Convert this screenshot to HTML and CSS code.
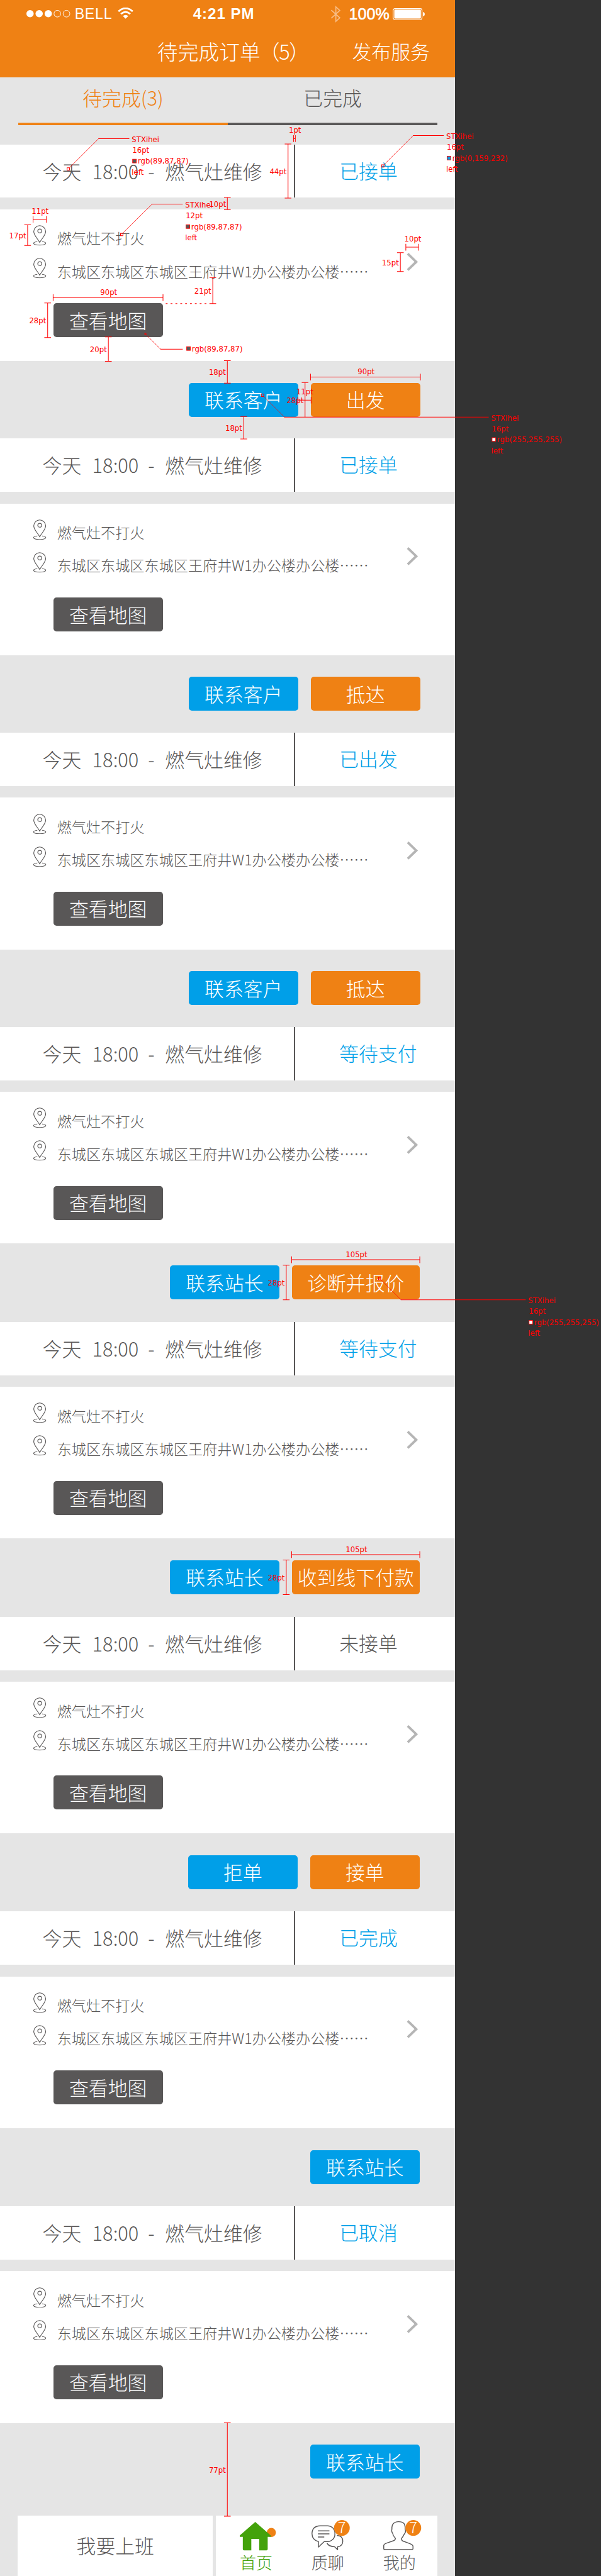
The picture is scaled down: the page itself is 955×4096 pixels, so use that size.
FILE: index.html
```html
<!DOCTYPE html>
<html lang="zh-CN">
<head>
<meta charset="utf-8">
<title>待完成订单</title>
<link rel="stylesheet" href="styles.css">
</head>
<body>
<svg class="defs" width="0" height="0" aria-hidden="true">
  <symbol id="pin" viewBox="0 0 22 34">
    <path d="M11 28.5C7.500 22 1.200 16.500 1.200 10.600a9.800 9.800 0 0 1 19.600 0C20.800 16.500 14.500 22 11 28.500z"/>
    <circle cx="11" cy="9.500" r="3.200"/>
    <path d="M7 27.200c-3.500.4-6 1.400-6 2.700 0 1.800 4.500 3 10 3s10-1.200 10-3c0-1.300-2.500-2.300-6-2.700"/>
  </symbol>
  <symbol id="arrow" viewBox="0 0 20 32">
    <path d="M2.500 2.500L16.500 16L2.500 29.500"/>
  </symbol>
</svg>
<div class="board">
  <main class="phone">
    <header class="top">
      <div class="status-bar">
        <svg class="signal" width="74" height="14" viewBox="0 0 74 14">
          <g fill="#fff"><circle cx="7" cy="7" r="6"/><circle cx="22" cy="7" r="6"/><circle cx="37" cy="7" r="6"/></g>
          <g fill="none" stroke="#fff"><circle cx="52" cy="7" r="5.500"/><circle cx="67" cy="7" r="5.500"/></g>
        </svg>
        <span class="carrier">BELL</span>
        <svg class="wifi" width="26" height="19" viewBox="0 0 26 19">
          <path d="M1.300 6.300Q13-4 24.700 6.300M5.300 10.600Q13 4 20.700 10.600" fill="none" stroke="#fff" stroke-width="2.900"/>
          <path d="M8.500 14Q13 10.200 17.500 14L13 18.500z" fill="#fff"/>
        </svg>
        <span class="clock">4:21 PM</span>
        <svg class="bluetooth" width="18" height="28" viewBox="0 0 18 28">
          <path d="M1.500 7.500L15.500 20L9 26V2L15.500 8L1.500 20.500" fill="none" stroke="#f8bd86" stroke-width="1.700"/>
        </svg>
        <span class="percent">100%</span>
        <svg class="battery" width="54" height="20" viewBox="0 0 54 20">
          <rect x=".7" y=".7" width="47.600" height="18.200" rx="3" fill="none" stroke="#fff" stroke-width="1.200"/>
          <rect x="2.600" y="2.400" width="43.800" height="14.800" rx="1.500" fill="#fff"/>
          <path d="M50 6.200q2.800.6 2.800 3.600t-2.800 3.600z" fill="#fff"/>
        </svg>
      </div>
      <div class="nav">
        <h1 class="nav-title">待完成订单<span class="count">（5）</span></h1>
        <span class="nav-link">发布服务</span>
      </div>
    </header>
    <nav class="tabs">
      <span class="tab tab-active">待完成(3)</span>
      <span class="tab">已完成</span>
    </nav>

    <section class="order">
      <div class="order-head"><div class="what"><span class="day">今天</span><span class="time">18:00</span><span class="dash">-</span><span>燃气灶维修</span></div><span class="state">已接单</span></div>
      <div class="order-body">
        <div class="lines">
          <div class="line"><svg class="pin"><use href="#pin"/></svg><span>燃气灶不打火</span></div>
          <div class="line"><svg class="pin"><use href="#pin"/></svg><span>东城区东城区东城区王府井<span class="num">W1</span>办公楼办公楼……</span></div>
          <span class="btn btn-map">查看地图</span>
        </div>
        <svg class="arrow"><use href="#arrow"/></svg>
      </div>
      <div class="actions"><span class="btn btn-blue">联系客户</span><span class="btn btn-orange">出发</span></div>
    </section>

    <section class="order">
      <div class="order-head"><div class="what"><span class="day">今天</span><span class="time">18:00</span><span class="dash">-</span><span>燃气灶维修</span></div><span class="state">已接单</span></div>
      <div class="order-body">
        <div class="lines">
          <div class="line"><svg class="pin"><use href="#pin"/></svg><span>燃气灶不打火</span></div>
          <div class="line"><svg class="pin"><use href="#pin"/></svg><span>东城区东城区东城区王府井<span class="num">W1</span>办公楼办公楼……</span></div>
          <span class="btn btn-map">查看地图</span>
        </div>
        <svg class="arrow"><use href="#arrow"/></svg>
      </div>
      <div class="actions"><span class="btn btn-blue">联系客户</span><span class="btn btn-orange">抵达</span></div>
    </section>

    <section class="order">
      <div class="order-head"><div class="what"><span class="day">今天</span><span class="time">18:00</span><span class="dash">-</span><span>燃气灶维修</span></div><span class="state">已出发</span></div>
      <div class="order-body">
        <div class="lines">
          <div class="line"><svg class="pin"><use href="#pin"/></svg><span>燃气灶不打火</span></div>
          <div class="line"><svg class="pin"><use href="#pin"/></svg><span>东城区东城区东城区王府井<span class="num">W1</span>办公楼办公楼……</span></div>
          <span class="btn btn-map">查看地图</span>
        </div>
        <svg class="arrow"><use href="#arrow"/></svg>
      </div>
      <div class="actions"><span class="btn btn-blue">联系客户</span><span class="btn btn-orange">抵达</span></div>
    </section>

    <section class="order tall">
      <div class="order-head"><div class="what"><span class="day">今天</span><span class="time">18:00</span><span class="dash">-</span><span>燃气灶维修</span></div><span class="state">等待支付</span></div>
      <div class="order-body">
        <div class="lines">
          <div class="line"><svg class="pin"><use href="#pin"/></svg><span>燃气灶不打火</span></div>
          <div class="line"><svg class="pin"><use href="#pin"/></svg><span>东城区东城区东城区王府井<span class="num">W1</span>办公楼办公楼……</span></div>
          <span class="btn btn-map">查看地图</span>
        </div>
        <svg class="arrow"><use href="#arrow"/></svg>
      </div>
      <div class="actions"><span class="btn btn-blue">联系站长</span><span class="btn btn-orange wide">诊断并报价</span></div>
    </section>

    <section class="order tall">
      <div class="order-head"><div class="what"><span class="day">今天</span><span class="time">18:00</span><span class="dash">-</span><span>燃气灶维修</span></div><span class="state">等待支付</span></div>
      <div class="order-body">
        <div class="lines">
          <div class="line"><svg class="pin"><use href="#pin"/></svg><span>燃气灶不打火</span></div>
          <div class="line"><svg class="pin"><use href="#pin"/></svg><span>东城区东城区东城区王府井<span class="num">W1</span>办公楼办公楼……</span></div>
          <span class="btn btn-map">查看地图</span>
        </div>
        <svg class="arrow"><use href="#arrow"/></svg>
      </div>
      <div class="actions"><span class="btn btn-blue">联系站长</span><span class="btn btn-orange wide">收到线下付款</span></div>
    </section>

    <section class="order tall">
      <div class="order-head"><div class="what"><span class="day">今天</span><span class="time">18:00</span><span class="dash">-</span><span>燃气灶维修</span></div><span class="state state-new">未接单</span></div>
      <div class="order-body">
        <div class="lines">
          <div class="line"><svg class="pin"><use href="#pin"/></svg><span>燃气灶不打火</span></div>
          <div class="line"><svg class="pin"><use href="#pin"/></svg><span>东城区东城区东城区王府井<span class="num">W1</span>办公楼办公楼……</span></div>
          <span class="btn btn-map">查看地图</span>
        </div>
        <svg class="arrow"><use href="#arrow"/></svg>
      </div>
      <div class="actions"><span class="btn btn-blue">拒单</span><span class="btn btn-orange">接单</span></div>
    </section>

    <section class="order tall">
      <div class="order-head"><div class="what"><span class="day">今天</span><span class="time">18:00</span><span class="dash">-</span><span>燃气灶维修</span></div><span class="state">已完成</span></div>
      <div class="order-body">
        <div class="lines">
          <div class="line"><svg class="pin"><use href="#pin"/></svg><span>燃气灶不打火</span></div>
          <div class="line"><svg class="pin"><use href="#pin"/></svg><span>东城区东城区东城区王府井<span class="num">W1</span>办公楼办公楼……</span></div>
          <span class="btn btn-map">查看地图</span>
        </div>
        <svg class="arrow"><use href="#arrow"/></svg>
      </div>
      <div class="actions"><span class="btn btn-blue">联系站长</span></div>
    </section>

    <section class="order last">
      <div class="order-head"><div class="what"><span class="day">今天</span><span class="time">18:00</span><span class="dash">-</span><span>燃气灶维修</span></div><span class="state">已取消</span></div>
      <div class="order-body">
        <div class="lines">
          <div class="line"><svg class="pin"><use href="#pin"/></svg><span>燃气灶不打火</span></div>
          <div class="line"><svg class="pin"><use href="#pin"/></svg><span>东城区东城区东城区王府井<span class="num">W1</span>办公楼办公楼……</span></div>
          <span class="btn btn-map">查看地图</span>
        </div>
        <svg class="arrow"><use href="#arrow"/></svg>
      </div>
      <div class="actions"><span class="btn btn-blue">联系站长</span></div>
    </section>

    <footer class="dock">
      <div class="shift">我要上班</div>
      <div class="menu">
        <div class="item item-active">
          <svg class="glyph" width="60" height="50" viewBox="0 0 60 50">
            <circle cx="52" cy="19.500" r="7.500" fill="#ef8114"/>
            <path d="M25.500 2.200L51 24.300v2.500H46V47a2 2 0 0 1-2 2H32V30H19v19H7a2 2 0 0 1-2-2V26.800H0v-2.500z" fill="#43a20b"/>
          </svg>
          <span>首页</span>
        </div>
        <div class="item">
          <svg class="glyph" width="66" height="52" viewBox="0 0 66 52">
            <g fill="none" stroke="#595757" stroke-width="1.500" stroke-linejoin="round">
              <path d="M14 9.500h12.500a12 12 0 0 1 12 12v2a12 12 0 0 1-12 12H21L11.500 44.500V35.500Q1 33 .8 22.500Q1 10 14 9.500z"/>
              <path d="M42 25.500q9.500.5 9.500 9.500 0 8-8.500 9v5l-5-5q-10-.5-12.500-6M10.500 17.800h19M10.500 22.900h19M10.500 28h10.500"/>
            </g>
            <circle cx="50" cy="13" r="13" fill="#ef8114"/>
            <text class="badge" x="50" y="22">7</text>
          </svg>
          <span>质聊</span>
        </div>
        <div class="item">
          <svg class="glyph" width="66" height="52" viewBox="0 0 66 52">
            <path d="M25 2.700C34 2.500 36.500 7 36 15q2 4-1.500 8.500-2.500 5-4.500 7 .3 3.500 2 4l12 4.500q5 2 5 4.500V47q0 1.800-2 1.800H2.500Q.8 48.800.8 47v-5q0-2.500 5-4l11.500-4q2.700-1 2.700-4-4-4-4.500-8-2.500-4-1.200-7Q13.500 3 25 2.700z" fill="#fff" stroke="#595757" stroke-width="1.500" stroke-linejoin="round"/>
            <circle cx="49.500" cy="13" r="13" fill="#ef8114"/>
            <text class="badge" x="49.500" y="22">7</text>
          </svg>
          <span>我的</span>
        </div>
      </div>
    </footer>
  </main>

  <svg class="notes" width="990" height="4245" viewBox="0 0 990 4245">
    <g class="rule">
      <!-- vertical measures -->
      <path d="M469 237.500h11M474.500 237.500V326.500M469 326.500h11"/>
      <path d="M369 325.500h11M374.500 325.500V345.500M369 345.500h11"/>
      <path d="M40 370.500h11M45.500 370.500V404.500M40 404.500h11"/>
      <path d="M345 457.500h11M350.500 457.500V500.500M345 500.500h11"/>
      <path d="M73 499.500h11M78.500 499.500V556.500M73 556.500h11"/>
      <path d="M173 555.500h11M178.500 555.500V595.500M173 595.500h11"/>
      <path d="M369 594.500h11M374.500 594.500V631.500M369 631.500h11"/>
      <path d="M396 686.500h11M401.500 686.500V723.500M396 723.500h11"/>
      <path d="M497 630.500h11M502.500 630.500V687.500"/>
      <path d="M654 416.500h11M659.500 416.500V447.500M654 447.500h11"/>
      <path d="M466 2085.500h11M471.500 2085.500V2142.500M466 2142.500h11"/>
      <path d="M466 2571.500h11M471.500 2571.500V2628.500M466 2628.500h11"/>
      <path d="M369 3993.500h11M374.500 3993.500V4147.500M369 4147.500h11"/>
      <!-- horizontal measures -->
      <path d="M483.500 223v11M483.500 228.500H486.500M486.500 223v11"/>
      <path d="M54.500 356v11M54.500 361.500H76.500M76.500 356v11"/>
      <path d="M87.500 485v11M87.500 490.500H268.500M268.500 485v11"/>
      <path d="M490.500 654v11M490.500 659.500H512.500M512.500 654v11"/>
      <path d="M511.500 616v11M511.500 621.500H692.500M692.500 616v11"/>
      <path d="M668.500 402v11M668.500 407.500H689.500M689.500 402v11"/>
      <path d="M480.500 2071v11M480.500 2076.500H691.500M691.500 2071v11"/>
      <path d="M480.500 2557v11M480.500 2562.500H691.500M691.500 2557v11"/>
      <path d="M273 500.500H345" stroke-dasharray="3 5"/>
      <!-- leaders -->
      <path d="M162 228.500H213M250 336.500H301M680 223.500H731M264 575.500H301M468 687.500H805M660 2142.500H866"/>
      <path class="thin" d="M114.500 276.500L162.500 228.500M202 384.500L250.500 336.500M632.500 271.500L680.500 223.500M240.500 551.500L264.500 575.500M434.500 653.500L468.500 687.500M627 2109L660.500 2142.500"/>
      <path d="M110.500 276.500h4v4h-4zM198.500 384.500h4v4h-4zM628.500 271.500h4v4h-4zM238.500 549.500h2v2h-2zM430.500 649.500h4v4h-4zM623.500 2105.500h4v4h-4z"/>
    </g>
    <g class="swatch">
      <rect x="218.500" y="262.500" width="6" height="6" fill="#595757"/>
      <rect x="306.500" y="370.500" width="6" height="6" fill="#595757"/>
      <rect x="736.500" y="257.500" width="6" height="6" fill="#009fe8"/>
      <rect x="307.500" y="571.500" width="6" height="6" fill="#595757"/>
      <rect x="810.500" y="721.500" width="6" height="6" fill="#fff"/>
      <rect x="871.500" y="2176.500" width="6" height="6" fill="#fff"/>
    </g>
    <g class="label">
      <text x="217" y="234">STXihei</text><text x="218" y="252">16pt</text><text x="227" y="270">rgb(89,87,87)</text><text x="217" y="288">left</text>
      <text x="305" y="342">STXihei</text><text x="306" y="360">12pt</text><text x="315" y="378">rgb(89,87,87)</text><text x="305" y="396">left</text>
      <text x="735" y="229">STXihei</text><text x="736" y="247">16pt</text><text x="745" y="265">rgb(0,159,232)</text><text x="735" y="283">left</text>
      <text x="316" y="580">rgb(89,87,87)</text>
      <text x="809" y="693">STXihei</text><text x="810" y="711">16pt</text><text x="819" y="729">rgb(255,255,255)</text><text x="809" y="747">left</text>
      <text x="870" y="2148">STXihei</text><text x="871" y="2166">16pt</text><text x="880" y="2184">rgb(255,255,255)</text><text x="870" y="2202">left</text>
    </g>
    <g class="label end">
      <text x="496" y="219">1pt</text>
      <text x="472" y="287">44pt</text>
      <text x="372.500" y="341">10pt</text>
      <text x="80" y="352">11pt</text>
      <text x="43" y="393">17pt</text>
      <text x="348" y="484">21pt</text>
      <text x="193" y="486">90pt</text>
      <text x="76" y="533">28pt</text>
      <text x="176" y="581">20pt</text>
      <text x="372" y="618">18pt</text>
      <text x="399" y="710">18pt</text>
      <text x="500" y="664">28pt</text>
      <text x="516" y="650">11pt</text>
      <text x="617" y="617">90pt</text>
      <text x="694" y="398">10pt</text>
      <text x="657" y="437">15pt</text>
      <text x="605" y="2072">105pt</text>
      <text x="469" y="2119">28pt</text>
      <text x="605" y="2558">105pt</text>
      <text x="469" y="2605">28pt</text>
      <text x="372" y="4076">77pt</text>
    </g>
  </svg>
</div>
</body>
</html>
```
FILE: styles.css
```css
* { box-sizing: border-box; }
html { background: #333; overflow: hidden; }
body { margin: 0; }
.defs { position: absolute; }

.board {
  zoom: 0.96465;
  position: relative;
  width: 990px;
  height: 4247px;
  overflow: hidden;
  background: #333;
  color: #595757;
  font: 300 32px/1 "Noto Sans CJK SC Light", "Noto Sans CJK SC DemiLight", "Noto Sans CJK SC", sans-serif;
  white-space: nowrap;
}
.phone {
  display: flex;
  flex-direction: column;
  width: 750px;
  height: 100%;
  background: #e5e5e5;
}

/* header */
.top { height: 128px; background: #ef8114; color: #fff; }
.status-bar {
  display: flex;
  align-items: center;
  height: 46px;
  padding-left: 42px;
  font: 24px/1 "Liberation Sans", sans-serif;
}
.carrier { width: 66px; margin-left: 7px; font-size: 24px; letter-spacing: .8px; }
.wifi { margin-left: 5px; margin-top: -3px; }
.clock { width: 104px; margin-left: 98px; font-weight: 700; font-size: 25px; letter-spacing: 1px; }
.bluetooth { margin-left: 122px; }
.percent { width: 67px; margin-left: 13px; font-size: 26px; -webkit-text-stroke: .6px #fff; }
.battery { margin-left: 5px; }
.nav { display: flex; align-items: center; height: 76px; padding-left: 259px; }
.nav-title { width: 321px; margin: 0; font-size: 34px; font-weight: 300; }
.count { margin-left: -2px; letter-spacing: -1.5px; }

/* tabs */
.tabs {
  display: flex;
  height: 78px;
  margin: 0 30px 32px;
}
.tab { width: 345px; padding: 17px 0 0 125px; box-shadow: inset 0 -4px #595757; }
.tab-active { padding-left: 106px; box-shadow: inset 0 -4px #ef8114; color: #ef8114; }

/* order */
.order { width: 749px; }
.order-head { display: flex; height: 88px; background: #fff; }
.what {
  display: flex;
  align-items: center;
  width: 486px;
  padding-left: 70px;
}
.what::after {
  content: "";
  align-self: stretch;
  width: 2px;
  margin-left: auto;
  background: #595757;
}
.day { width: 82px; }
.time { width: 92px; }
.dash { width: 28px; }
.state { padding: 27px 0 0 73px; color: #009fe8; }
.state-new { color: #595757; }
.order-body {
  display: flex;
  align-items: flex-start;
  justify-content: space-between;
  height: 250px;
  margin-top: 19px;
  padding: 26px 59px 39px 54px;
  background: #fff;
}
.lines { display: flex; flex-direction: column; gap: 20px; height: 100%; }
.line { display: flex; align-items: flex-start; gap: 17px; height: 34px; font-size: 24px; }
.line > span { padding-top: 10px; }
.pin { width: 23px; height: 34px; fill: none; stroke: #595757; stroke-width: 1.2; }
.num { letter-spacing: 0; }
.arrow { flex: none; width: 21px; height: 32px; margin-top: 45px; fill: none; stroke: #b5b5b5; stroke-width: 4; }
.btn {
  display: flex;
  align-items: center;
  justify-content: center;
  width: 180px;
  height: 56px;
  border-radius: 5px;
  color: #fff;
}
.btn-map { margin: 21px 0 0 34px; background: #595757; }
.btn-blue { background: #009fe8; }
.btn-orange { background: #ef8114; }
.wide { width: 210px; }
.actions {
  display: flex;
  justify-content: flex-end;
  gap: 21px;
  height: 128px;
  padding: 36px 57px 0 0;
}
.tall .actions { height: 129px; padding-right: 58px; }
.last .actions { height: 153px; padding-right: 58px; }

/* dock */
.dock { display: flex; flex: 1; gap: 6px; padding: 0 30px 0 29px; }
.shift { flex: none; width: 321px; padding: 33px 0 0 97px; background: #fff; }
.menu { display: flex; flex: 1; min-width: 0; padding: 7px 0 0 39px; background: #fff; }
.item { display: flex; flex: none; flex-direction: column; width: 118px; font-size: 27px; gap: 4px; }
.item:last-child { width: 84px; }
.item-active { color: #43a20b; }
.glyph { height: 52px; overflow: visible; }
.item-active .glyph { height: 50px; margin: 1px 0; }
.badge { fill: #fff; font-size: 25px; text-anchor: middle; }

/* spec overlay */
.notes { position: absolute; top: 0; left: 0; }
.rule { fill: none; stroke: #f00; stroke-width: 1.05; }
.thin { stroke-width: .8; }
.swatch { stroke: #f00; }
.label { fill: #f00; font: 13.5px "DejaVu Sans Condensed", "DejaVu Sans", sans-serif; font-stretch: condensed; }
.end { text-anchor: end; }
```
